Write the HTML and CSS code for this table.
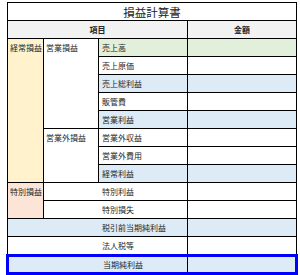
FILE: index.html
```html
<!DOCTYPE html>
<html lang="ja">
<head>
<meta charset="utf-8">
<link rel="stylesheet" href="styles.css">
</head>
<body>
<table class="pl">
  <colgroup>
    <col class="c1"><col class="c2"><col class="c3"><col class="c4">
  </colgroup>
  <tr class="title-row"><td colspan="4" class="title">損益計算書</td></tr>
  <tr class="head-row"><th colspan="3">項目</th><th>金額</th></tr>
  <tr class="dash">
    <td rowspan="8" class="cat keijo">経常損益</td>
    <td rowspan="5" class="sub">営業損益</td>
    <td class="item green">売上高</td><td class="amt green"></td>
  </tr>
  <tr class="dash"><td class="item">売上原価</td><td class="amt"></td></tr>
  <tr class="dash"><td class="item blue">売上総利益</td><td class="amt blue"></td></tr>
  <tr class="dash"><td class="item">販管費</td><td class="amt"></td></tr>
  <tr><td class="item blue">営業利益</td><td class="amt blue"></td></tr>
  <tr class="dash">
    <td rowspan="3" class="sub">営業外損益</td>
    <td class="item">営業外収益</td><td class="amt"></td>
  </tr>
  <tr class="dash"><td class="item">営業外費用</td><td class="amt"></td></tr>
  <tr><td class="item blue">経常利益</td><td class="amt blue"></td></tr>
  <tr>
    <td rowspan="2" class="cat tokubetsu">特別損益</td>
    <td colspan="2" class="item wide2">特別利益</td><td class="amt"></td>
  </tr>
  <tr><td colspan="2" class="item wide2">特別損失</td><td class="amt"></td></tr>
  <tr><td colspan="3" class="item wide3 blue">税引前当期純利益</td><td class="amt blue"></td></tr>
  <tr><td colspan="3" class="item wide3">法人税等</td><td class="amt"></td></tr>
  <tr class="final"><td colspan="3" class="item wide3 blue">当期純利益</td><td class="amt blue"></td></tr>
</table>
</body>
</html>
```
FILE: styles.css
```css
html, body {
  margin: 0;
  padding: 0;
  background: #fff;
}
body {
  padding: 2px 6px;
  font-family: "Noto Sans CJK JP", "Noto Sans", sans-serif;
  color: #262626;
}
.pl {
  border-collapse: collapse;
  table-layout: fixed;
  width: 289px;
}
.c1 { width: 36px; }
.c2 { width: 55px; }
.c3 { width: 89px; }
.c4 { width: 109px; }
.pl td, .pl th {
  border: 1px solid #000;
  height: 17px;
  padding: 0 0 0 3px;
  font-size: 8px;
  line-height: 10px;
  text-align: left;
  vertical-align: middle;
  white-space: nowrap;
  overflow: hidden;
}
.pl td.cat, .pl td.sub {
  vertical-align: top;
  padding-top: 4px;
  padding-left: 2px;
}
.keijo { background: #fff2cc; }
.tokubetsu { background: #fce4d6; }
.pl .title {
  text-align: center;
  font-size: 11.5px;
  color: #222;
  padding: 0;
}
.pl th {
  background: #f2f2f2;
  text-align: center;
  font-weight: bold;
  padding: 0;
}
.green { background: #e2efda; }
.blue { background: #ddebf7; }
.pl tr.dash td.item, .pl tr.dash td.amt {
  border-bottom: 1px dashed #000;
}
.pl td.wide2 { padding-left: 58px; }
.pl td.wide3 { padding-left: 94px; }
.pl tr.final td {
  height: 15px;
  border-top: 3px solid #0000ff;
  border-bottom: 3px solid #0000ff;
}
.pl tr.final td:first-child { border-left: 3px solid #0000ff; }
.pl tr.final td:last-child { border-right: 3px solid #0000ff; }
```
